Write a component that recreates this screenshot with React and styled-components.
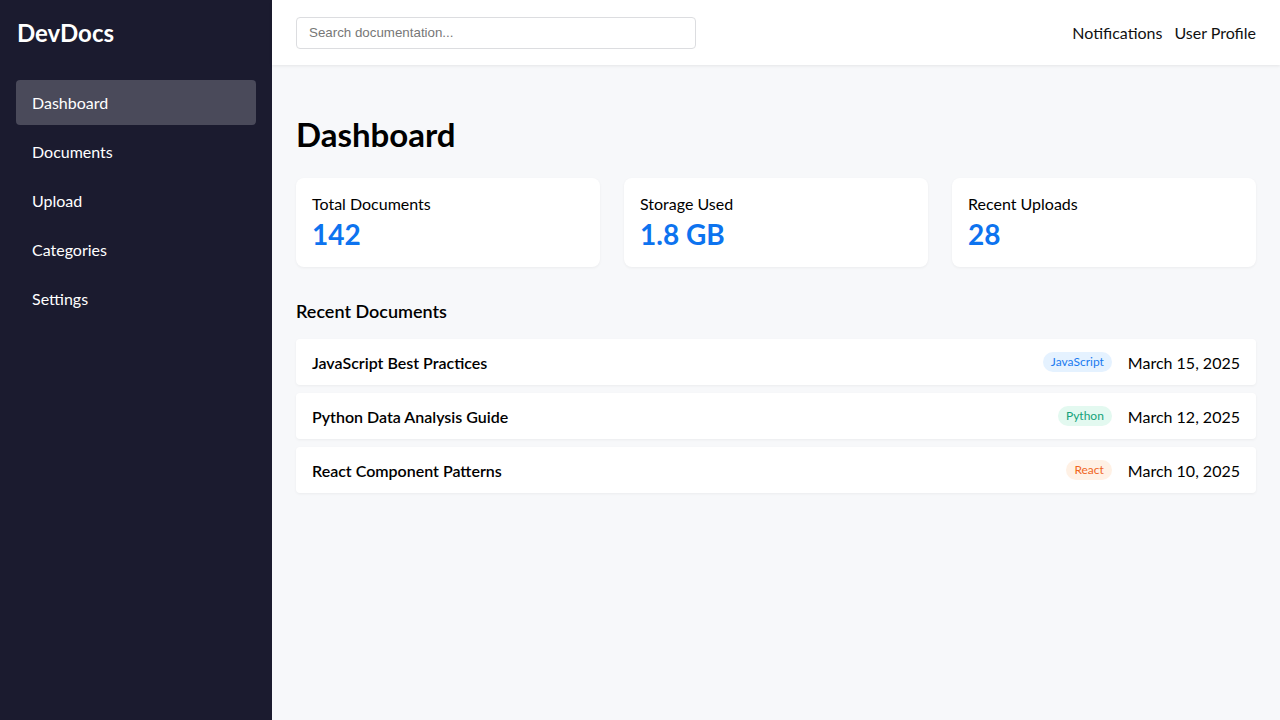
import styled, { createGlobalStyle } from "styled-components";

const GlobalStyle = createGlobalStyle`
  body {
    margin: 0;
    font-family: "Segoe UI", Lato, "Noto Sans", sans-serif;
    background: #f7f8fa;
  }
  * { box-sizing: border-box; }
`;

const Layout = styled.div`
  display: flex;
  min-height: 100vh;
`;

const Sidebar = styled.aside`
  width: 272px;
  flex-shrink: 0;
  background: #1b1b2f;
  color: #fff;
  padding: 16px;
`;

const Logo = styled.div`
  font-size: 24px;
  font-weight: 700;
  height: 34px;
  line-height: 34px;
  margin: 0 0 30px 1px;
`;

const NavItem = styled.div`
  height: 45px;
  display: flex;
  align-items: center;
  padding: 0 16px;
  margin-bottom: 4px;
  font-size: 16px;
  border-radius: 4px;
  background: ${(p) => (p.$active ? "#4a4a5a" : "transparent")};
`;

const Main = styled.div`
  flex: 1;
  display: flex;
  flex-direction: column;
`;

const Header = styled.header`
  height: 65px;
  background: #fff;
  display: flex;
  align-items: center;
  justify-content: space-between;
  padding: 0 24px;
  box-shadow: 0 1px 3px rgba(0, 0, 0, 0.08);
`;

const Search = styled.input`
  width: 400px;
  height: 32px;
  border: 1px solid #dcdde0;
  border-radius: 4px;
  padding: 0 12px;
  font-family: "Liberation Sans", Arial, sans-serif;
  font-size: 13.33px;
  &::placeholder { color: #777; }
`;

const HeaderLinks = styled.div`
  display: flex;
  gap: 12px;
  font-size: 16px;
  color: #111;
`;

const Content = styled.main`
  padding: 24px;
`;

const Title = styled.h1`
  font-size: 33px;
  font-weight: 700;
  margin: 24px 0 23px;
  line-height: 42px;
`;

const Cards = styled.div`
  display: grid;
  grid-template-columns: repeat(3, 1fr);
  gap: 24px;
`;

const Card = styled.div`
  background: #fff;
  border-radius: 8px;
  padding: 16px;
  height: 89px;
  box-shadow: 0 1px 3px rgba(0, 0, 0, 0.05);
`;

const CardLabel = styled.div`
  font-size: 16px;
  line-height: 20px;
`;

const CardValue = styled.div`
  font-size: 28px;
  font-weight: 700;
  color: #0d73ef;
  line-height: 36px;
  margin-top: 2px;
`;

const SectionTitle = styled.h2`
  font-size: 18px;
  font-weight: 600;
  margin: 32px 0 16px;
  line-height: 24px;
`;

const DocList = styled.div`
  display: flex;
  flex-direction: column;
  gap: 8px;
`;

const DocRow = styled.div`
  height: 46px;
  background: #fff;
  border-radius: 4px;
  padding: 0 16px;
  display: flex;
  align-items: center;
  box-shadow: 0 1px 3px rgba(0, 0, 0, 0.05);
`;

const DocName = styled.div`
  flex: 1;
  font-size: 16px;
  font-weight: 600;
`;

const tagColors = {
  JavaScript: ["#e5f2ff", "#1a7af0"],
  Python: ["#e3f9f0", "#14a37a"],
  React: ["#fff1e5", "#f0661e"],
};

const Tag = styled.span`
  font-size: 12px;
  line-height: 14px;
  padding: 3px 8px;
  border-radius: 12px;
  background: ${(p) => tagColors[p.$kind][0]};
  color: ${(p) => tagColors[p.$kind][1]};
  margin-right: 16px;
`;

const DocDate = styled.div`
  font-size: 16px;
`;

const docs = [
  ["JavaScript Best Practices", "JavaScript", "March 15, 2025"],
  ["Python Data Analysis Guide", "Python", "March 12, 2025"],
  ["React Component Patterns", "React", "March 10, 2025"],
];

const App = () => {
  return (
    <Layout>
      <GlobalStyle />
      <Sidebar>
        <Logo>DevDocs</Logo>
        <NavItem $active>Dashboard</NavItem>
        <NavItem>Documents</NavItem>
        <NavItem>Upload</NavItem>
        <NavItem>Categories</NavItem>
        <NavItem>Settings</NavItem>
      </Sidebar>
      <Main>
        <Header>
          <Search placeholder="Search documentation..." />
          <HeaderLinks>
            <span>Notifications</span>
            <span>User Profile</span>
          </HeaderLinks>
        </Header>
        <Content>
          <Title>Dashboard</Title>
          <Cards>
            <Card>
              <CardLabel>Total Documents</CardLabel>
              <CardValue>142</CardValue>
            </Card>
            <Card>
              <CardLabel>Storage Used</CardLabel>
              <CardValue>1.8 GB</CardValue>
            </Card>
            <Card>
              <CardLabel>Recent Uploads</CardLabel>
              <CardValue>28</CardValue>
            </Card>
          </Cards>
          <SectionTitle>Recent Documents</SectionTitle>
          <DocList>
            {docs.map(([name, kind, date]) => (
              <DocRow key={name}>
                <DocName>{name}</DocName>
                <Tag $kind={kind}>{kind}</Tag>
                <DocDate>{date}</DocDate>
              </DocRow>
            ))}
          </DocList>
        </Content>
      </Main>
    </Layout>
  );
};

export default App;
